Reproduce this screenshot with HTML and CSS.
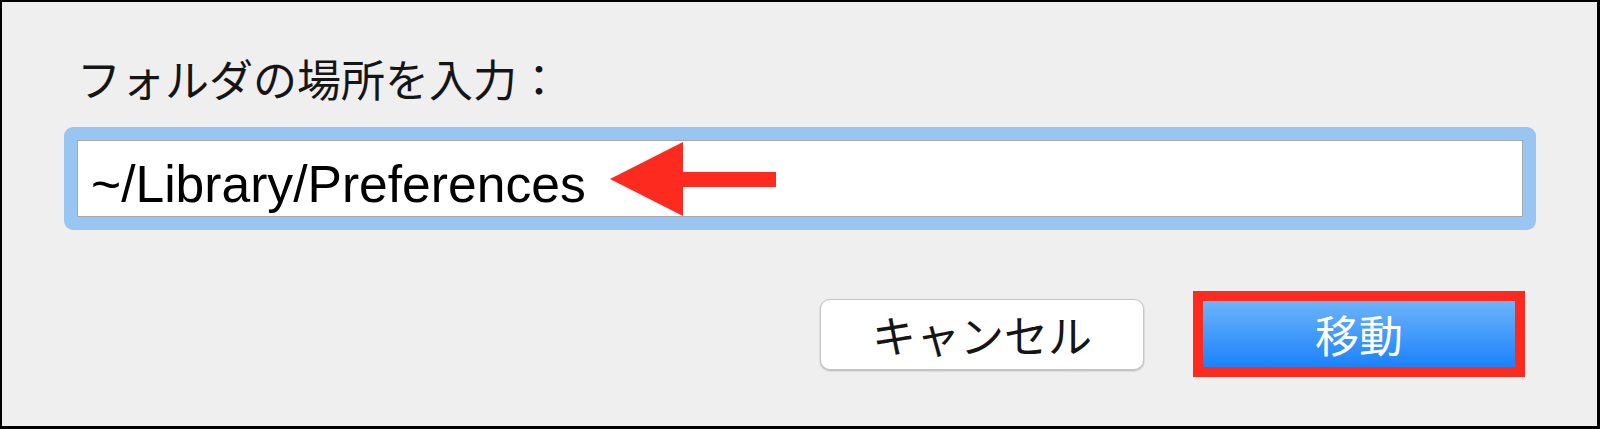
FILE: index.html
```html
<!DOCTYPE html>
<html lang="ja">
<head>
  <meta charset="UTF-8">
  <title>フォルダへ移動</title>
  <link rel="stylesheet" href="styles.css">
</head>
<body>
<div class="dialog">
  <label class="prompt" for="path">フォルダの場所を入力：</label>

  <div class="field">
    <div class="field-box">
      <span class="path" id="path">~/Library/Preferences</span>
    </div>
    <svg class="arrow" width="166" height="74" viewBox="0 0 166 74">
      <polygon points="0,37 73,0 73,30 166,30 166,45 73,45 73,74" fill="#fc2a1f"/>
    </svg>
  </div>

  <div class="actions">
    <button class="btn">キャンセル</button>
    <span class="mark">
      <button class="btn btn-primary">移動</button>
    </span>
  </div>
</div>
</body>
</html>
```

FILE: styles.css
```css
html, body {
  margin: 0;
  height: 100%;
}
body {
  background: #efefef;
  color: #151515;
  font-family: "Noto Sans CJK JP", "Liberation Sans", sans-serif;
}
.dialog {
  box-sizing: border-box;
  height: 429px;
  border: solid #000;
  border-width: 2px 3px 3px 2px;
  padding: 44px 61px 0 62px;
  display: flex;
  flex-direction: column;
}
.prompt {
  display: block;
  font-size: 44px;
  padding-left: 13px;
}
.field {
  position: relative;
  margin-top: 17px;
  background: #99c5f3;
  border-radius: 9px;
  padding: 13px;
}
.field-box {
  box-sizing: border-box;
  height: 77px;
  background: #fff;
  border: 1px solid #a9a9a9;
  padding: 15px 12px 0 13px;
}
.path {
  font-family: "Liberation Sans", Arial, sans-serif;
  font-size: 51.6px;
  line-height: 57px;
  color: #000;
}
.arrow {
  position: absolute;
  left: 546px;
  top: 15px;
}
.actions {
  display: flex;
  justify-content: flex-end;
  align-items: center;
  gap: 49px;
  margin-top: 61px;
  padding-right: 11px;
}
.btn {
  box-sizing: border-box;
  font-family: "Noto Sans CJK JP", sans-serif;
  font-size: 44px;
  color: #151515;
  background: #fff;
  border: 1px solid #c6c6c6;
  border-radius: 10px;
  box-shadow: 0 1px 2px rgba(0, 0, 0, .25);
  width: 324px;
  height: 71px;
  padding: 0;
  display: flex;
  align-items: center;
  justify-content: center;
}
.mark {
  display: flex;
  border: 10px solid #fc2a1f;
}
.btn-primary {
  width: 312px;
  height: 66px;
  border: 0;
  border-radius: 0;
  box-shadow: none;
  color: #fff;
  background: linear-gradient(#6db4f9, #1b82fb);
}
```
